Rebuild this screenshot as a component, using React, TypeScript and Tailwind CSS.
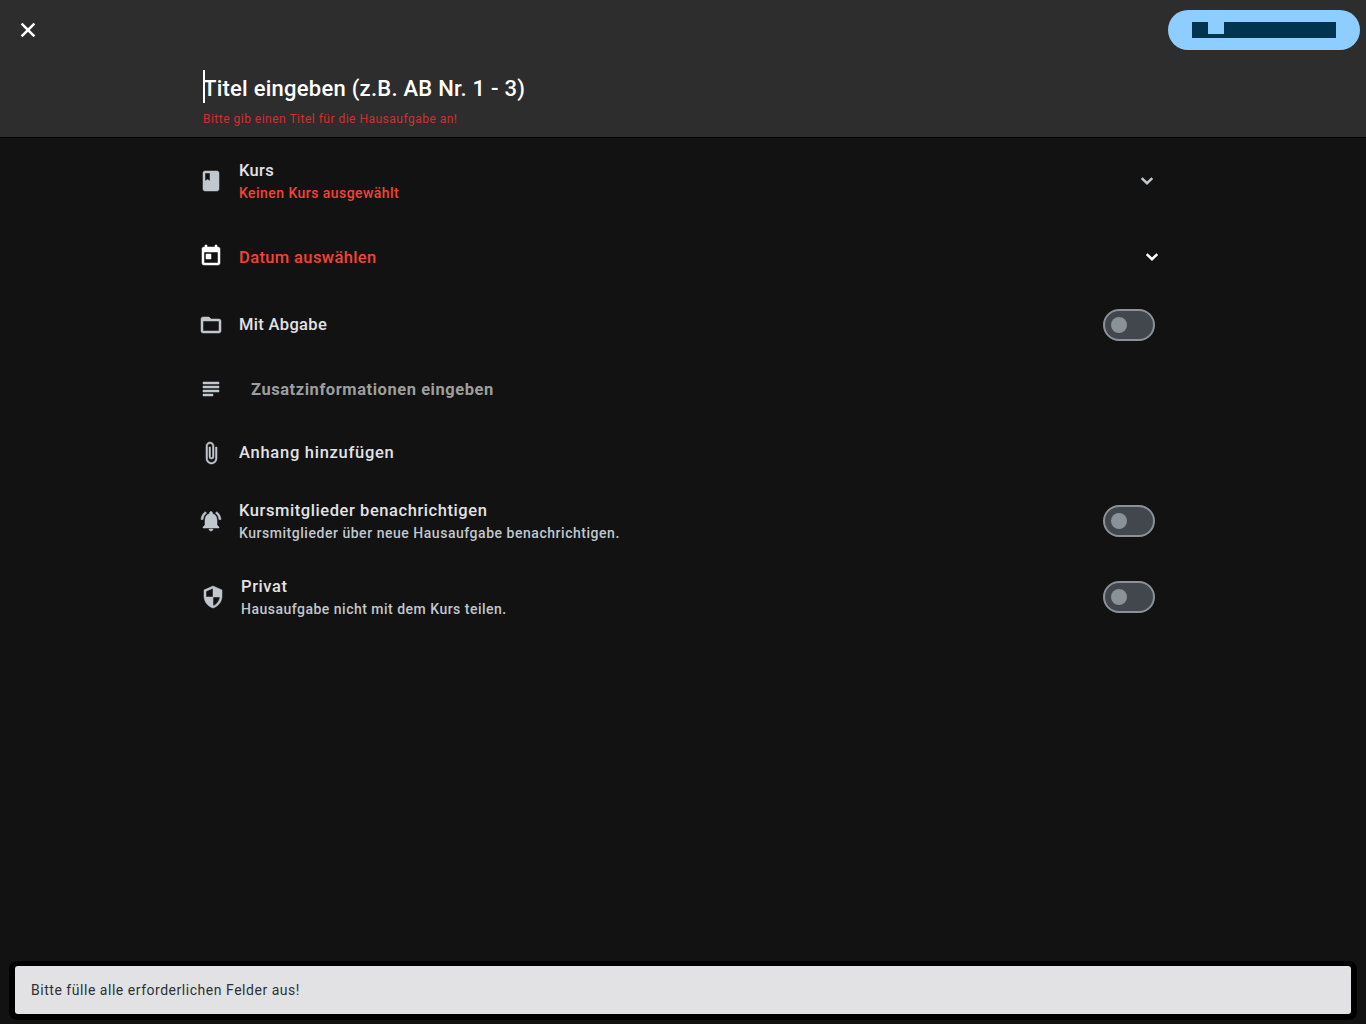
import { type ReactNode } from "react";
import { MdBook, MdToday, MdFolderOpen, MdSubject, MdAttachFile, MdNotificationsActive, MdSecurity } from "react-icons/md";

function Chevron({ className }: { className: string }) {
  return (
    <svg viewBox="0 0 14 8" className={`h-2 w-3.5 ${className}`} fill="none" stroke="currentColor" strokeWidth="2.5">
      <path d="M1.7 1.1 7 6.2l5.3-5.1" />
    </svg>
  );
}

function Toggle() {
  return (
    <button className="mr-1 flex h-8 w-[52px] items-center rounded-full border-2 border-[#8b9198] bg-[#41474d] pl-1.5">
      <span className="size-4 rounded-full bg-[#8b9198]" />
    </button>
  );
}

function Row({ className, icon, children, end }: { className: string; icon: ReactNode; children: ReactNode; end?: ReactNode }) {
  return (
    <div className={`flex h-12 items-center text-[16.5px] ${className}`}>
      <span className="mr-4 shrink-0 text-[#c1c7ce] [&_path:not([fill=none])]:[stroke-linejoin:round] [&_path:not([fill=none])]:[stroke-width:0.5] [&_svg]:size-6">
        {icon}
      </span>
      <div className="flex-1 whitespace-nowrap">{children}</div>
      {end}
    </div>
  );
}

export default function App() {
  return (
    <div className="flex h-screen flex-col bg-[#121212] font-['Roboto',sans-serif] font-medium text-[#e2e2e5]">
      <header className="h-[138px] border-b border-black bg-[#2d2d2d]">
        <div className="flex h-[60px] items-center justify-between pl-5 pr-1.5">
          <svg viewBox="0 0 16 16" className="size-4 text-white" fill="none" stroke="currentColor" strokeWidth="2.6">
            <path d="m1.6 1.6 12.8 12.8M14.4 1.6 1.6 14.4" />
          </svg>
          <button className="flex h-10 w-48 items-center justify-center rounded-full bg-[#8ecdff]">
            <svg viewBox="0 0 144 16" className="h-4 w-36 fill-[#00344f]">
              <path d="M0 0h16v12h16V0h112v16H0z" />
            </svg>
          </button>
        </div>
        <div className="ml-[203px] mt-2.5 flex h-[33px] items-center">
          <span className="h-[33px] w-0.5 bg-white" />
          <span className="-ml-0.5 mt-1 whitespace-nowrap text-[22px] tracking-[0.25px] text-white">Titel eingeben (z.B. AB Nr. 1 - 3)</span>
        </div>
        <p className="ml-[203px] mt-2 text-xs font-normal tracking-[0.49px] text-[#d32f2f]">Bitte gib einen Titel für die Hausaufgabe an!</p>
      </header>

      <main className="flex flex-1 flex-col pl-[199px] pr-[207px]">
        <Row className="mt-[19px]" icon={<MdBook />} end={<Chevron className="mr-[5px] text-[#c1c7ce]" />}>
          <p className="leading-6 tracking-[0.35px]">Kurs</p>
          <p className="text-sm leading-5 tracking-[0.45px] text-[#f44336]">Keinen Kurs ausgewählt</p>
        </Row>
        <Row className="mt-7" icon={<MdToday className="mb-0.5 text-white" />} end={<Chevron className="text-white" />}>
          <p className="pt-0.5 tracking-[0.38px] text-[#f44336]">Datum auswählen</p>
        </Row>
        <Row className="mt-5" icon={<MdFolderOpen />} end={<Toggle />}>
          <p className="tracking-[0.33px]">Mit Abgabe</p>
        </Row>
        <Row className="mt-4" icon={<MdSubject />}>
          <p className="pl-3 pt-0.5 font-bold tracking-[0.55px] text-[#9e9e9e]">Zusatzinformationen eingeben</p>
        </Row>
        <Row className="mt-4" icon={<MdAttachFile />}>
          <p className="tracking-[0.73px]">Anhang hinzufügen</p>
        </Row>
        <Row className="mt-5" icon={<MdNotificationsActive />} end={<Toggle />}>
          <p className="leading-6 tracking-[0.57px]">Kursmitglieder benachrichtigen</p>
          <p className="text-sm leading-5 tracking-[0.53px] text-[#c1c7ce]">Kursmitglieder über neue Hausaufgabe benachrichtigen.</p>
        </Row>
        <Row className="mt-7 pl-0.5" icon={<MdSecurity />} end={<Toggle />}>
          <p className="leading-6 tracking-[0.6px]">Privat</p>
          <p className="text-sm leading-5 tracking-[0.49px] text-[#c1c7ce]">Hausaufgabe nicht mit dem Kurs teilen.</p>
        </Row>
      </main>

      <footer className="mx-[9px] mb-1 rounded-lg border-x-6 border-b-6 border-t-5 border-black bg-black">
        <div className="flex h-12 items-center rounded-[3px] bg-[#e2e2e5] pl-4 text-sm font-normal tracking-[0.53px] text-[#2e3133]">
          Bitte fülle alle erforderlichen Felder aus!
        </div>
      </footer>
    </div>
  );
}
